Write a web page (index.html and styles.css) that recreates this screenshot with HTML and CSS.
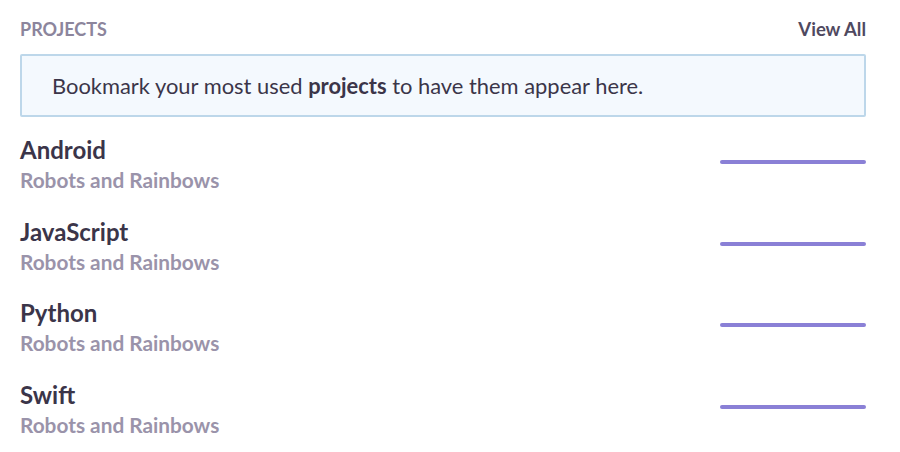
FILE: index.html
```html
<!DOCTYPE html>
<html>
<head>
    <title>Projects</title>
    <link rel="stylesheet" href="styles.css">
</head>
<body>
    <div class="panel">
        <div class="panel-header">
            <span class="panel-title">Projects</span>
            <a class="view-all" href="#">View All</a>
        </div>

        <div class="notice">
            <span>Bookmark your most used <strong>projects</strong> to have them appear here.</span>
        </div>

        <ul class="project-list">
            <li class="project">
                <div class="project-info">
                    <div class="project-name">Android</div>
                    <div class="project-org">Robots and Rainbows</div>
                </div>
                <div class="project-bar"></div>
            </li>
            <li class="project">
                <div class="project-info">
                    <div class="project-name">JavaScript</div>
                    <div class="project-org">Robots and Rainbows</div>
                </div>
                <div class="project-bar"></div>
            </li>
            <li class="project">
                <div class="project-info">
                    <div class="project-name">Python</div>
                    <div class="project-org">Robots and Rainbows</div>
                </div>
                <div class="project-bar"></div>
            </li>
            <li class="project">
                <div class="project-info">
                    <div class="project-name">Swift</div>
                    <div class="project-org">Robots and Rainbows</div>
                </div>
                <div class="project-bar"></div>
            </li>
        </ul>
    </div>
</body>
</html>
```

FILE: styles.css
```css
body {
    font-family: Lato, 'Open Sans', sans-serif;
    margin: 0;
    padding: 19px 34px 0 20px;
    background-color: #fff;
    color: #3b3549;
}
.panel-header {
    display: flex;
    justify-content: space-between;
    align-items: center;
    height: 20px;
}
.panel-title {
    text-transform: uppercase;
    font-size: 18px;
    font-weight: bold;
    color: #8c859c;
}
.view-all {
    font-size: 18.5px;
    font-weight: bold;
    color: #4f4960;
    text-decoration: none;
}
.notice {
    margin-top: 15px;
    height: 63px;
    box-sizing: border-box;
    padding: 0 30px;
    display: flex;
    align-items: center;
    font-size: 21.9px;
    color: #3b3549;
    background-color: #f4f9fe;
    border: 2px solid #bdd7ea;
    border-radius: 2px;
}
.project-list {
    list-style: none;
    margin: 17px 0 0 0;
    padding: 0;
}
.project {
    display: flex;
    justify-content: space-between;
    align-items: flex-start;
    height: 81.5px;
}
.project-name {
    font-size: 24px;
    font-weight: bold;
    line-height: 31px;
    color: #3b3549;
}
.project-org {
    font-size: 20.8px;
    font-weight: bold;
    line-height: 29px;
    color: #9a93aa;
}
.project-bar {
    width: 146px;
    height: 4px;
    margin-top: 26px;
    border-radius: 2px;
    background-color: #8a80d6;
}
```
